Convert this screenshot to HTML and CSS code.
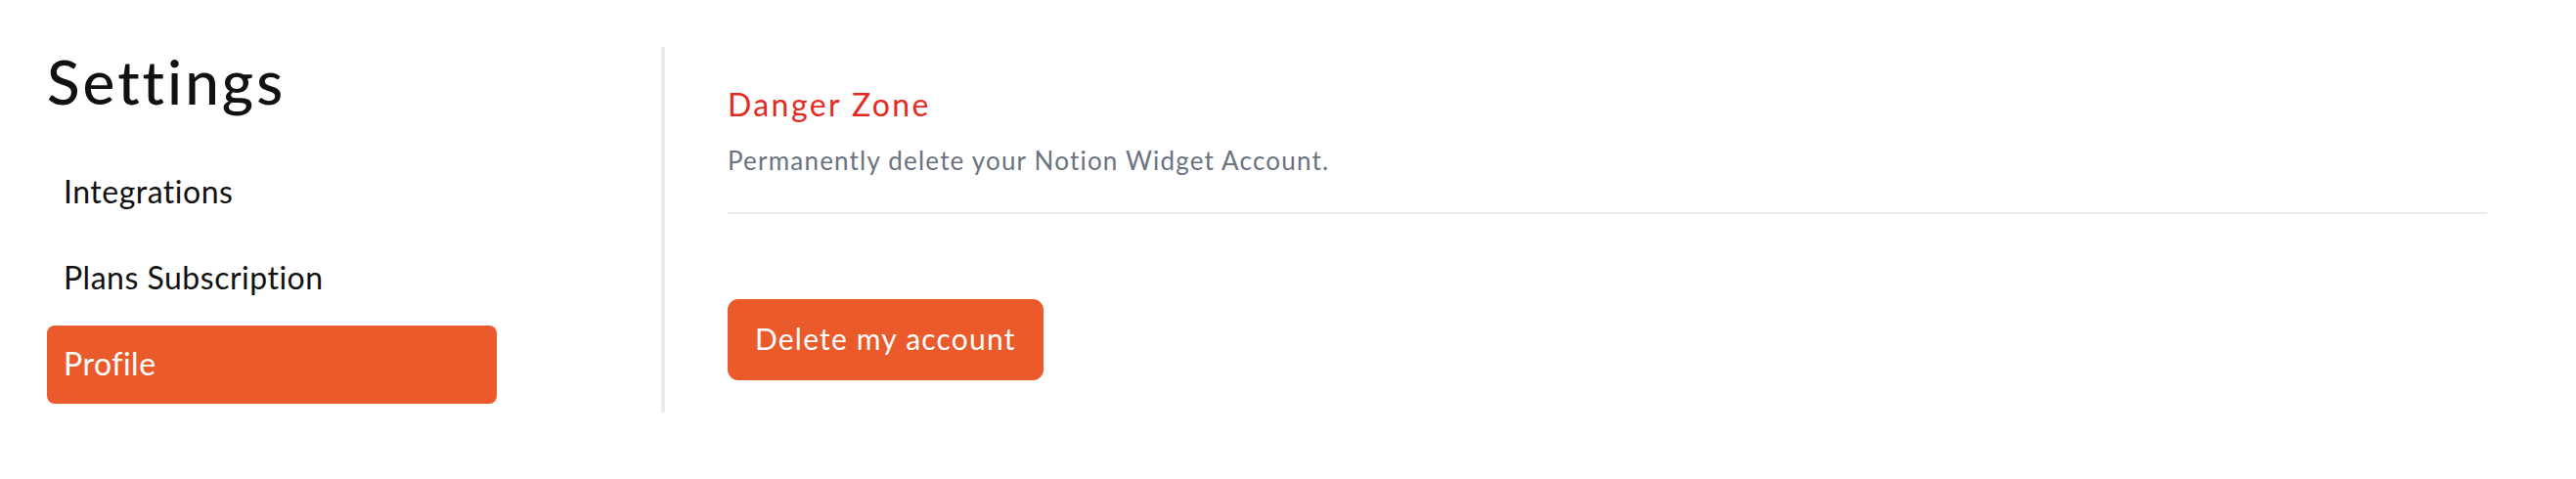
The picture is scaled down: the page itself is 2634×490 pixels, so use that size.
FILE: index.html
```html
<!DOCTYPE html>
<html lang="en">
<head>
    <meta charset="UTF-8">
    <meta name="viewport" content="width=device-width, initial-scale=1.0">
    <title>Settings</title>
    <link rel="stylesheet" href="styles.css">
</head>
<body>
    <div class="page">
        <aside class="sidebar">
            <h1 class="title">Settings</h1>
            <nav class="menu">
                <a class="menu-item" href="#">Integrations</a>
                <a class="menu-item" href="#">Plans Subscription</a>
                <a class="menu-item active" href="#">Profile</a>
            </nav>
        </aside>

        <main class="content">
            <div class="section-head">
                <h2 class="danger-title">Danger Zone</h2>
                <p class="danger-text">Permanently delete your Notion Widget Account.</p>
            </div>
            <button class="delete-btn" type="button">Delete my account</button>
        </main>
    </div>
</body>
</html>
```

FILE: styles.css
```css
body {
    font-family: Lato, "Open Sans", sans-serif;
    background-color: #fff;
    margin: 0;
    color: #111;
}
.page {
    display: flex;
    padding-top: 48px;
}
.sidebar {
    width: 628px;
    padding: 0 0 9px 48px;
    border-right: 4px solid #ebebeb;
}
.title {
    margin: 0;
    font-size: 62px;
    line-height: 70px;
    font-weight: 500;
    letter-spacing: 3px;
    color: #111;
}
.menu {
    display: flex;
    flex-direction: column;
    gap: 8px;
    width: 460px;
    margin-top: 39px;
}
.menu-item {
    display: block;
    padding: 15px 17px 17px;
    font-size: 32px;
    line-height: 48px;
    letter-spacing: 0.5px;
    color: #111;
    text-decoration: none;
    border-radius: 8px;
}
.menu-item.active {
    background-color: #eb5a2a;
    color: #fff;
}
.content {
    flex: 1;
    padding: 35px 91px 0 64px;
}
.section-head {
    padding-bottom: 35px;
    border-bottom: 2px solid #ebebeb;
}
.danger-title {
    margin: 0;
    font-size: 32px;
    line-height: 48px;
    font-weight: 400;
    letter-spacing: 2.4px;
    color: #e52b1f;
}
.danger-text {
    margin: 15px 0 0;
    font-size: 26px;
    line-height: 36px;
    letter-spacing: 1.2px;
    color: #6b7280;
}
.delete-btn {
    margin-top: 87px;
    padding: 18px 28px 20px;
    font-family: inherit;
    font-size: 30px;
    line-height: 45px;
    letter-spacing: 1.2px;
    color: #fff;
    background-color: #eb5a2a;
    border: none;
    border-radius: 11px;
    cursor: pointer;
}
```
